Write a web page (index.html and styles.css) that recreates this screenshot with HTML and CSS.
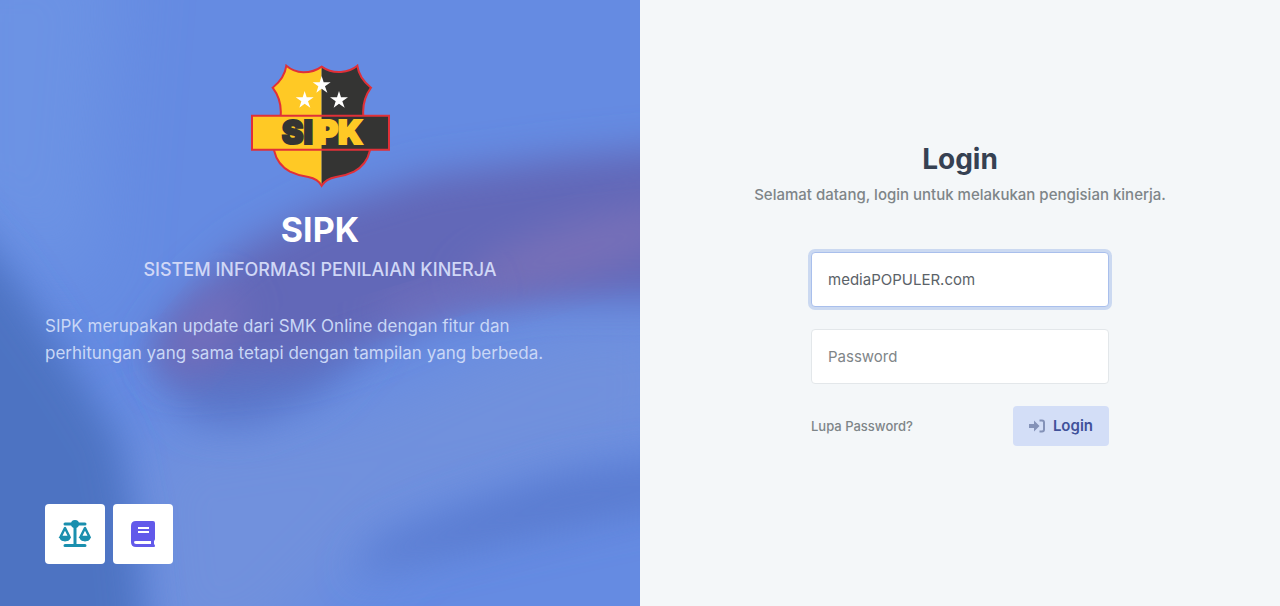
FILE: index.html
```html
<!DOCTYPE html>
<html lang="id">
  <head>
    <meta charset="UTF-8" />
    <meta name="viewport" content="width=device-width, initial-scale=1.0" />
    <title>Login SIPK</title>
    <link rel="stylesheet" href="styles.css">
  </head>
  <body>
    <div class="page">
      <section class="intro">
        <svg class="intro-bg" viewBox="0 0 640 606" preserveAspectRatio="none" aria-hidden="true">
          <defs>
            <filter id="soft" x="-50%" y="-50%" width="200%" height="200%"><feGaussianBlur stdDeviation="19" /></filter>
            <filter id="softer" x="-80%" y="-80%" width="260%" height="260%"><feGaussianBlur stdDeviation="34" /></filter>
          </defs>
          <rect width="640" height="606" fill="#658be2" />
          <path d="M-60 -60H120L90 300L0 240L-60 220Z" fill="#6c93e4" filter="url(#softer)" />
          <path d="M130 440L330 410L560 320L680 310V440L400 520L260 660H150Z" fill="#7191dd" filter="url(#softer)" />
          <path d="M-60 190L10 275L75 370L118 440L135 530L150 680H-60Z" fill="#4e73c2" filter="url(#soft)" />
          <path d="M160 360L380 330L320 395L250 425L190 420Z" fill="#5a76c9" filter="url(#soft)" />
          <path d="M700 145L560 158L430 175L320 208L240 250L185 300L150 345L165 380L220 375L300 368L370 345L450 312L540 297L700 297Z" fill="#6268b8" filter="url(#soft)" />
          <ellipse cx="580" cy="250" rx="120" ry="28" transform="rotate(-17 580 250)" fill="#776fb8" filter="url(#soft)" />
          <ellipse cx="430" cy="300" rx="60" ry="12" transform="rotate(-17 430 300)" fill="#7570bb" filter="url(#soft)" />
          <ellipse cx="205" cy="330" rx="50" ry="22" transform="rotate(-50 205 330)" fill="#7470bd" filter="url(#soft)" />
          <path d="M700 455L560 475L470 505L380 540L350 575L450 555L560 530L700 500Z" fill="#5a7bd0" filter="url(#soft)" />
        </svg>
        <div class="intro-body">
          <svg class="logo" viewBox="30 27 423 372" role="img" aria-label="Logo SIPK">
            <path d="M245 35Q222 52 190 52Q160 50 139 32Q134 70 98 98Q126 135 122 182L102 286Q112 330 150 350Q175 362 205 366Q234 372 245 392Z" fill="#ffc925" />
            <path d="M245 35Q270 53 303 51Q333 48 352 32Q357 70 393 98Q366 135 370 182L390 286Q380 330 342 350Q318 362 288 366Q257 372 245 392Z" fill="#343433" />
            <path class="logo-line" d="M245 35Q222 52 190 52Q160 50 139 32Q134 70 98 98Q126 135 122 182L102 286Q112 330 150 350Q175 362 205 366Q234 372 245 392Q257 372 288 366Q318 362 342 350Q380 330 390 286L370 182Q366 135 393 98Q357 70 352 32Q333 48 303 51Q270 53 245 35Z" />
            <path d="M36 182H245V284H36Z" fill="#ffc925" />
            <path d="M245 182H447V284H245Z" fill="#343433" />
            <path class="logo-line" d="M36 182H447V284H36Z" />
            <g fill="#fff">
              <path id="star" d="M245 63L251 82H272L255 94L262 113L245 101L229 113L235 94L218 82H239Z" />
              <use href="#star" x="-51" y="45" />
              <use href="#star" x="52" y="45" />
            </g>
            <text class="logo-text logo-si" x="125" y="268">SI</text>
            <text class="logo-text logo-pk" x="230" y="268">PK</text>
          </svg>
          <h1 class="intro-title">SIPK</h1>
          <p class="intro-subtitle">SISTEM INFORMASI PENILAIAN KINERJA</p>
          <p class="intro-text">SIPK merupakan update dari SMK Online dengan fitur dan perhitungan yang sama tetapi dengan tampilan yang berbeda.</p>
        </div>
        <nav class="shortcuts">
          <a class="shortcut" href="#" aria-label="Peraturan">
            <svg viewBox="0 0 34 28" width="34" height="28" fill="none" stroke="#1a8fae" stroke-width="3" stroke-linecap="round" stroke-linejoin="round">
              <path d="M7 4H27M17 4V25M7 25.500H27" />
              <circle cx="17" cy="4" r="2.500" fill="#1a8fae" />
              <path d="M7 8L2.500 17H11.500ZM27 8L22.500 17H31.500Z" stroke-width="2.500" />
              <path d="M1.500 17.500H12.500Q11.500 21 7 21Q2.500 21 1.500 17.500ZM21.500 17.500H32.500Q31.500 21 27 21Q22.500 21 21.500 17.500Z" fill="#1a8fae" stroke-width="1" />
            </svg>
          </a>
          <a class="shortcut" href="#" aria-label="Panduan">
            <svg viewBox="0 0 24 28" width="24" height="28">
              <path d="M5 1H22Q24 1 24 3V19Q24 20 23 21V24Q24 25 24 26Q24 27 23 27H5Q0 27 0 22V6Q0 1 5 1Z" fill="#6259ea" />
              <path d="M7 8H18M7 12H18" stroke="#fff" stroke-width="2" />
              <path d="M5 21H20V24H5Q3 24 3 22Q3 21 5 21Z" fill="#fff" />
            </svg>
          </a>
        </nav>
      </section>
      <main class="login">
        <h2 class="login-title">Login</h2>
        <p class="login-text">Selamat datang, login untuk melakukan pengisian kinerja.</p>
        <form class="login-form">
          <input class="field field-active" type="text" name="username" value="mediaPOPULER.com" aria-label="Username" />
          <input class="field" type="password" name="password" placeholder="Password" aria-label="Password" />
          <div class="actions">
            <a class="forgot" href="#">Lupa Password?</a>
            <button class="submit" type="submit">
              <svg viewBox="0 0 16 14" width="16" height="14" aria-hidden="true">
                <path d="M0 5H5V1.500L10.500 7L5 12.500V9H0Z" fill="#8492b8" />
                <path d="M10.500 1.500H13Q15 1.500 15 3.500V10.500Q15 12.500 13 12.500H10.500" fill="none" stroke="#8492b8" stroke-width="2" />
              </svg>
              Login
            </button>
          </div>
        </form>
      </main>
    </div>
  </body>
</html>
```
FILE: styles.css
```css
* {
  box-sizing: border-box;
}
body {
  margin: 0;
  font-family: Inter, "Liberation Sans", sans-serif;
  background: #f4f7f9;
}
h1,
h2,
p {
  margin: 0;
}
a {
  text-decoration: none;
}
.page {
  display: grid;
  grid-template-columns: 1fr 1fr;
  min-height: 100vh;
}

/* left panel */
.intro {
  position: relative;
  display: flex;
  flex-direction: column;
  justify-content: space-between;
  padding: 64px 45px 42px;
  overflow: hidden;
  background: #658be2;
}
.intro-bg {
  position: absolute;
  top: 0;
  left: 0;
  width: 100%;
  height: 100%;
}
.intro-body {
  position: relative;
  display: flex;
  flex-direction: column;
  align-items: center;
}
.logo {
  width: 141px;
  height: 124px;
}
.logo-line {
  fill: none;
  stroke: #e03038;
  stroke-width: 6px;
}
.logo-text {
  font-size: 98px;
  font-weight: 900;
  stroke-width: 6px;
}
.logo-si {
  fill: #343433;
  stroke: #343433;
}
.logo-pk {
  fill: #ffc925;
  stroke: #ffc925;
}
.intro-title {
  margin-top: 20px;
  font-size: 34px;
  line-height: 44px;
  color: #fff;
}
.intro-subtitle {
  margin-top: 4px;
  font-size: 18px;
  line-height: 28px;
  font-weight: 500;
  color: #d0d7f6;
}
.intro-text {
  align-self: stretch;
  margin-top: 29px;
  font-size: 17px;
  line-height: 27px;
  color: #c9d7f6;
}
.shortcuts {
  position: relative;
  display: flex;
  gap: 8px;
}
.shortcut {
  display: flex;
  align-items: center;
  justify-content: center;
  width: 60px;
  height: 60px;
  border-radius: 4px;
  background: #fff;
}

/* right panel */
.login {
  display: flex;
  flex-direction: column;
  align-items: center;
  justify-content: center;
  padding: 20px 20px 40px;
}
.login-title {
  font-size: 28px;
  line-height: 36px;
  color: #364152;
}
.login-text {
  margin-top: 6px;
  font-size: 15px;
  line-height: 24px;
  font-weight: 500;
  color: #7e8588;
}
.login-form {
  display: flex;
  flex-direction: column;
  gap: 22px;
  width: 100%;
  max-width: 298px;
  margin-top: 45px;
}
.field {
  width: 100%;
  height: 55px;
  padding: 0 16px;
  border: 1px solid #e3e7ea;
  border-radius: 4px;
  outline: none;
  font-family: inherit;
  font-size: 15px;
  color: #5b6268;
  background: #fff;
}
.field::placeholder {
  color: #808588;
}
.field:focus,
.field-active {
  border-color: #a9bfec;
  box-shadow: 0 0 0 3px #cbd9f1;
}
.actions {
  display: flex;
  align-items: center;
  justify-content: space-between;
}
.forgot {
  font-size: 13px;
  font-weight: 500;
  color: #7e8588;
}
.submit {
  display: flex;
  align-items: center;
  gap: 8px;
  height: 40px;
  padding: 0 16px;
  border: none;
  border-radius: 4px;
  font-family: inherit;
  font-size: 15px;
  font-weight: 600;
  color: #40519a;
  background: #d3def7;
}
```
